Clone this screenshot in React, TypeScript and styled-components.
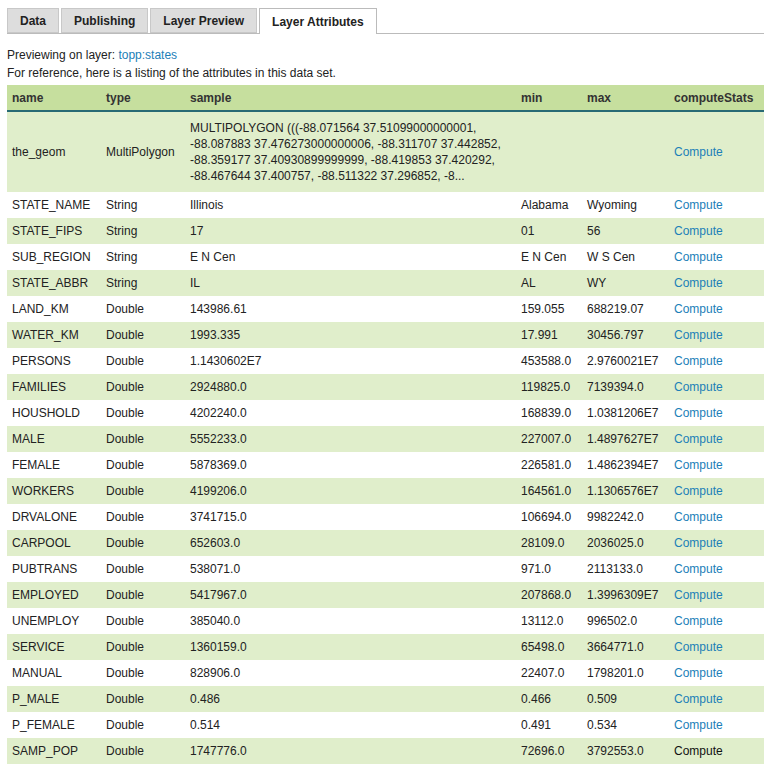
import React from "react";
import styled, { createGlobalStyle } from "styled-components";

const GlobalStyle = createGlobalStyle`
  body {
    margin: 0;
    background: #fff;
    font-family: "Liberation Sans", Arial, sans-serif;
    font-size: 12px;
    color: #222;
  }
`;

interface Attr {
  name: string;
  type: string;
  sample: string;
  min: string;
  max: string;
}

const SAMPLE_GEOM =
  "MULTIPOLYGON (((-88.071564 37.51099000000001, -88.087883 37.476273000000006, -88.311707 37.442852, -88.359177 37.40930899999999, -88.419853 37.420292, -88.467644 37.400757, -88.511322 37.296852, -8...";

const attributes: Attr[] = [
  { name: "the_geom", type: "MultiPolygon", sample: SAMPLE_GEOM, min: "", max: "" },
  { name: "STATE_NAME", type: "String", sample: "Illinois", min: "Alabama", max: "Wyoming" },
  { name: "STATE_FIPS", type: "String", sample: "17", min: "01", max: "56" },
  { name: "SUB_REGION", type: "String", sample: "E N Cen", min: "E N Cen", max: "W S Cen" },
  { name: "STATE_ABBR", type: "String", sample: "IL", min: "AL", max: "WY" },
  { name: "LAND_KM", type: "Double", sample: "143986.61", min: "159.055", max: "688219.07" },
  { name: "WATER_KM", type: "Double", sample: "1993.335", min: "17.991", max: "30456.797" },
  { name: "PERSONS", type: "Double", sample: "1.1430602E7", min: "453588.0", max: "2.9760021E7" },
  { name: "FAMILIES", type: "Double", sample: "2924880.0", min: "119825.0", max: "7139394.0" },
  { name: "HOUSHOLD", type: "Double", sample: "4202240.0", min: "168839.0", max: "1.0381206E7" },
  { name: "MALE", type: "Double", sample: "5552233.0", min: "227007.0", max: "1.4897627E7" },
  { name: "FEMALE", type: "Double", sample: "5878369.0", min: "226581.0", max: "1.4862394E7" },
  { name: "WORKERS", type: "Double", sample: "4199206.0", min: "164561.0", max: "1.1306576E7" },
  { name: "DRVALONE", type: "Double", sample: "3741715.0", min: "106694.0", max: "9982242.0" },
  { name: "CARPOOL", type: "Double", sample: "652603.0", min: "28109.0", max: "2036025.0" },
  { name: "PUBTRANS", type: "Double", sample: "538071.0", min: "971.0", max: "2113133.0" },
  { name: "EMPLOYED", type: "Double", sample: "5417967.0", min: "207868.0", max: "1.3996309E7" },
  { name: "UNEMPLOY", type: "Double", sample: "385040.0", min: "13112.0", max: "996502.0" },
  { name: "SERVICE", type: "Double", sample: "1360159.0", min: "65498.0", max: "3664771.0" },
  { name: "MANUAL", type: "Double", sample: "828906.0", min: "22407.0", max: "1798201.0" },
  { name: "P_MALE", type: "Double", sample: "0.486", min: "0.466", max: "0.509" },
  { name: "P_FEMALE", type: "Double", sample: "0.514", min: "0.491", max: "0.534" },
  { name: "SAMP_POP", type: "Double", sample: "1747776.0", min: "72696.0", max: "3792553.0" },
];

const tabs = ["Data", "Publishing", "Layer Preview", "Layer Attributes"];

// name, type, sample, min, max, computeStats
const colWidths = [94, 84, 331, 66, 87, 95];

const App = () => {
  return (
    <>
      <GlobalStyle />
      <Page>
        <TabBar>
          {tabs.map((t) => (
            <Tab key={t} $active={t === "Layer Attributes"}>
              {t}
            </Tab>
          ))}
        </TabBar>
        <Intro>
          <p>
            Previewing on layer: <Link href="#">topp:states</Link>
          </p>
          <p>For reference, here is a listing of the attributes in this data set.</p>
        </Intro>
        <AttrTable>
          <colgroup>
            {colWidths.map((w, i) => (
              <Col key={i} $w={w} />
            ))}
          </colgroup>
          <thead>
            <tr>
              <th>name</th>
              <th>type</th>
              <th>sample</th>
              <th>min</th>
              <th>max</th>
              <th>computeStats</th>
            </tr>
          </thead>
          <tbody>
            {attributes.map((a, i) => (
              <Row key={a.name} $odd={i % 2 === 0} $tall={i === 0}>
                <td>{a.name}</td>
                <td>{a.type}</td>
                <td>{a.sample}</td>
                <td>{a.min}</td>
                <td>{a.max}</td>
                <td>
                  <Link href="#" $hover={i === attributes.length - 1}>
                    Compute
                  </Link>
                </td>
              </Row>
            ))}
          </tbody>
        </AttrTable>
      </Page>
    </>
  );
};

export default App;

const Page = styled.div`
  padding: 8px 7px 0 7px;
`;

const TabBar = styled.div`
  display: flex;
  gap: 2px;
  border-bottom: 1px solid #bbb;
  height: 25px;
`;

const Tab = styled.div<{ $active?: boolean }>`
  box-sizing: border-box;
  height: ${(p) => (p.$active ? "26px" : "25px")};
  padding: ${(p) => (p.$active ? "1px 12px 0" : "0 12px")};
  display: flex;
  align-items: center;
  font-size: 12px;
  font-weight: bold;
  color: #222;
  background: ${(p) => (p.$active ? "#fff" : "#ddd")};
  border: 1px solid ${(p) => (p.$active ? "#bbb" : "#c8c8c8")};
  border-bottom: ${(p) => (p.$active ? "none" : "1px solid #c8c8c8")};
`;

const Intro = styled.div`
  padding-top: 12px;

  p {
    margin: 0;
    line-height: 18px;
  }
`;

const Link = styled.a<{ $hover?: boolean }>`
  color: ${(p) => (p.$hover ? "#111" : "#1b80b8")};
  text-decoration: none;
`;

const AttrTable = styled.table`
  width: 757px;
  table-layout: fixed;
  border-collapse: collapse;
  margin-top: 3px;

  th {
    background: #c6df9e;
    color: #333;
    font-weight: bold;
    text-align: left;
    height: 25px;
    padding: 0 5px;
    border-bottom: 2px solid #286a74;
  }
`;

const Col = styled.col<{ $w: number }>`
  width: ${(p) => p.$w}px;
`;

const Row = styled.tr<{ $odd: boolean; $tall?: boolean }>`
  background: ${(p) => (p.$odd ? "#e0eecb" : "#fff")};

  td {
    padding: ${(p) => (p.$tall ? "8px 5px" : "5px")};
    line-height: 16px;
    vertical-align: middle;
  }
`;
